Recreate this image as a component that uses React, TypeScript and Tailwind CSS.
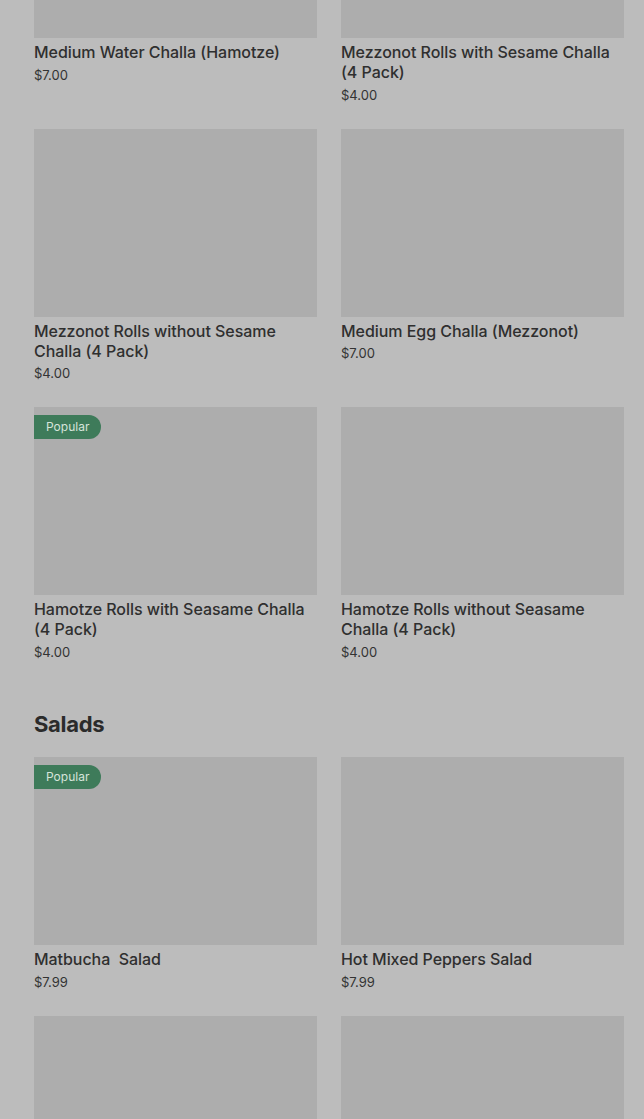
import React from 'react';

type Item = { name: string; price: string; popular?: boolean };

const breads: Item[] = [
  { name: 'Medium Water Challa (Hamotze)', price: '$7.00' },
  { name: 'Mezzonot Rolls with Sesame Challa (4 Pack)', price: '$4.00' },
  { name: 'Mezzonot Rolls without Sesame Challa (4 Pack)', price: '$4.00' },
  { name: 'Medium Egg Challa (Mezzonot)', price: '$7.00' },
  { name: 'Hamotze Rolls with Seasame Challa (4 Pack)', price: '$4.00', popular: true },
  { name: 'Hamotze Rolls without Seasame Challa (4 Pack)', price: '$4.00' },
];

const salads: Item[] = [
  { name: 'Matbucha  Salad', price: '$7.99', popular: true },
  { name: 'Hot Mixed Peppers Salad', price: '$7.99' },
  { name: 'Israeli Salad', price: '$6.99' },
  { name: 'Eggplant Salad', price: '$7.99' },
];

const ItemCard = ({ item }: { item: Item }) => (
  <div className="flex flex-col">
    <div className="relative h-[188px] bg-[#adadad]">
      {item.popular && (
        <span className="absolute left-0 top-2 h-6 pl-3 pr-3 rounded-r-full bg-[#3e7b5a] text-[#d6e4da] text-[12px] leading-6">
          Popular
        </span>
      )}
    </div>
    <h3 className="mt-1 text-[16px] leading-5 font-medium tracking-[-0.05px] text-[#2f2f2f] whitespace-pre-wrap">{item.name}</h3>
    <p className="mt-[2.5px] text-[13px] leading-5 text-[#333333]">{item.price}</p>
  </div>
);

export default function App() {
  return (
    <div className="min-h-screen overflow-hidden bg-[#bcbcbc] font-['Inter','Liberation_Sans',sans-serif]">
      <div className="mt-[-150px] pl-[34px] pr-5">
        <div className="grid grid-cols-2 gap-6">
          {breads.map((item) => (
            <ItemCard key={item.name} item={item} />
          ))}
        </div>

        <h2 className="mt-[46px] mb-[17.5px] text-[22px] leading-8 font-bold tracking-[-0.3px] text-[#2b2b2b]">Salads</h2>

        <div className="grid grid-cols-2 gap-6">
          {salads.map((item) => (
            <ItemCard key={item.name} item={item} />
          ))}
        </div>
      </div>
    </div>
  );
}
